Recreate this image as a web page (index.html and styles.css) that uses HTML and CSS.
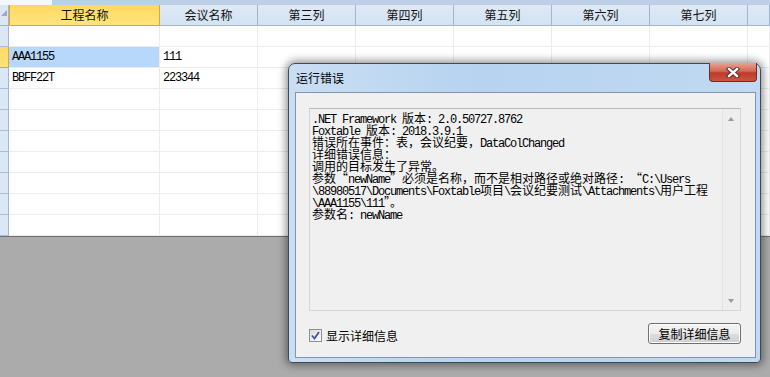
FILE: index.html
```html
<!DOCTYPE html>
<html lang="zh-CN">
<head>
    <meta charset="UTF-8">
    <title>运行错误</title>
    <link rel="stylesheet" href="styles.css">
</head>
<body>
    <div class="app">
        <div class="tabstrip">
            <div class="tab"></div>
        </div>

        <div class="grid">
            <div class="row head">
                <div class="rowhdr corner"></div>
                <div class="cell c1 sel">工程名称</div>
                <div class="cell">会议名称</div>
                <div class="cell">第三列</div>
                <div class="cell">第四列</div>
                <div class="cell">第五列</div>
                <div class="cell">第六列</div>
                <div class="cell">第七列</div>
                <div class="cell last"></div>
            </div>
            <div class="row">
                <div class="rowhdr"></div>
                <div class="cell c1"></div>
                <div class="cell"></div><div class="cell"></div><div class="cell"></div>
                <div class="cell"></div><div class="cell"></div><div class="cell"></div>
                <div class="cell last"></div>
            </div>
            <div class="row">
                <div class="rowhdr sel"></div>
                <div class="cell c1 current">AAA1155</div>
                <div class="cell">111</div>
                <div class="cell"></div><div class="cell"></div><div class="cell"></div>
                <div class="cell"></div><div class="cell"></div>
                <div class="cell last"></div>
            </div>
            <div class="row">
                <div class="rowhdr"></div>
                <div class="cell c1">BBFF22T</div>
                <div class="cell">223344</div>
                <div class="cell"></div><div class="cell"></div><div class="cell"></div>
                <div class="cell"></div><div class="cell"></div>
                <div class="cell last"></div>
            </div>
            <!-- empty rows -->
            <div class="row"><div class="rowhdr"></div><div class="cell c1"></div><div class="cell"></div><div class="cell"></div><div class="cell"></div><div class="cell"></div><div class="cell"></div><div class="cell"></div><div class="cell last"></div></div>
            <div class="row"><div class="rowhdr"></div><div class="cell c1"></div><div class="cell"></div><div class="cell"></div><div class="cell"></div><div class="cell"></div><div class="cell"></div><div class="cell"></div><div class="cell last"></div></div>
            <div class="row"><div class="rowhdr"></div><div class="cell c1"></div><div class="cell"></div><div class="cell"></div><div class="cell"></div><div class="cell"></div><div class="cell"></div><div class="cell"></div><div class="cell last"></div></div>
            <div class="row"><div class="rowhdr"></div><div class="cell c1"></div><div class="cell"></div><div class="cell"></div><div class="cell"></div><div class="cell"></div><div class="cell"></div><div class="cell"></div><div class="cell last"></div></div>
            <div class="row"><div class="rowhdr"></div><div class="cell c1"></div><div class="cell"></div><div class="cell"></div><div class="cell"></div><div class="cell"></div><div class="cell"></div><div class="cell"></div><div class="cell last"></div></div>
            <div class="row"><div class="rowhdr"></div><div class="cell c1"></div><div class="cell"></div><div class="cell"></div><div class="cell"></div><div class="cell"></div><div class="cell"></div><div class="cell"></div><div class="cell last"></div></div>
            <div class="row"><div class="rowhdr"></div><div class="cell c1"></div><div class="cell"></div><div class="cell"></div><div class="cell"></div><div class="cell"></div><div class="cell"></div><div class="cell"></div><div class="cell last"></div></div>
        </div>

        <div class="dialog">
            <div class="dlg-title">运行错误</div>
            <div class="dlg-close">
                <svg width="14" height="11" viewBox="0 0 14 11">
                    <path d="M3 2 L11 9 M11 2 L3 9" stroke="#3a2a28" stroke-width="4.2" stroke-linecap="square"/>
                    <path d="M3 2 L11 9 M11 2 L3 9" stroke="#fff" stroke-width="2.4" stroke-linecap="square"/>
                </svg>
            </div>
            <div class="dlg-body">
                <div class="detail-box">
                    <div class="detail">
                        <div class="ln"><span class="en">.NET Framework </span>版本<span class="en">: 2.0.50727.8762</span></div>
                        <div class="ln"><span class="en">Foxtable </span>版本<span class="en">: 2018.3.9.1</span></div>
                        <div class="ln">错误所在事件：表，会议纪要，<span class="en">DataColChanged</span></div>
                        <div class="ln">详细错误信息：</div>
                        <div class="ln">调用的目标发生了异常。</div>
                        <div class="ln">参数“<span class="en">newName</span>”必须是名称，而不是相对路径或绝对路径<span class="en">: </span>“<span class="en">C:\Users</span></div>
                        <div class="ln"><span class="en">\88980517\Documents\Foxtable</span>项目<span class="en">\</span>会议纪要测试<span class="en">\Attachments\</span>用户工程</div>
                        <div class="ln"><span class="en">\AAA1155\111</span>”。</div>
                        <div class="ln">参数名<span class="en">: newName</span></div>
                    </div>
                    <div class="vscroll">
                        <span class="arrow up"></span>
                        <span class="arrow down"></span>
                    </div>
                </div>
                <div class="dlg-foot">
                    <label class="check">
                        <span class="box">
                            <svg width="9" height="9" viewBox="0 0 9 9">
                                <path d="M1 4.5 L3.5 7.5 L8 1" fill="none" stroke="#3d56a0" stroke-width="1.8"/>
                            </svg>
                        </span>
                        显示详细信息
                    </label>
                    <button class="btn">复制详细信息</button>
                </div>
            </div>
        </div>
    </div>
</body>
</html>
```

FILE: styles.css
```css
body {
    margin: 0;
    font-family: "Noto Sans CJK SC", sans-serif;
    font-size: 12px;
    color: #000;
}

.app {
    position: relative;
    width: 770px;
    height: 377px;
    background-color: #ababab;
    overflow: hidden;
}

.tabstrip {
    height: 5px;
    background-color: #bccfe6;
}

.tab {
    width: 52px;
    height: 5px;
    background-color: #f4f7fc;
}

.grid {
    background-color: #fff;
    border-bottom: 1px solid #6f6f6f;
}

.row {
    display: flex;
    height: 21px;
}

.rowhdr {
    flex: 0 0 9px;
    box-sizing: border-box;
    background-color: #dce7f5;
    border-right: 1px solid #9eb6ce;
    border-bottom: 1px solid #a9bdd6;
}

.rowhdr.sel {
    background: linear-gradient(#ffd965, #ffe27c);
    border-color: #e0a43c;
}

.rowhdr.corner {
    position: relative;
    border-bottom-color: #9eb6ce;
}

.rowhdr.corner::after {
    content: "";
    position: absolute;
    right: 1px;
    top: 5px;
    border-style: solid;
    border-width: 0 0 6px 6px;
    border-color: transparent transparent #9aa9bb transparent;
}

.cell {
    flex: 0 0 98px;
    box-sizing: border-box;
    border-right: 1px solid #ececec;
    border-bottom: 1px solid #ececec;
    padding-left: 3px;
    line-height: 20px;
    font-family: "Liberation Mono", monospace;
    font-size: 12px;
    letter-spacing: -1.2px;
    white-space: nowrap;
}

.cell.c1 {
    flex-basis: 151px;
}

.cell.last {
    flex: 1 0 22px;
}

.cell.current {
    background-color: #b7d8fb;
}

.head .cell {
    font-family: "Noto Sans CJK SC", sans-serif;
    letter-spacing: 0;
    text-align: center;
    padding-left: 0;
    background: linear-gradient(#dfe9f6, #d4e2f2);
    border-right-color: #9eb6ce;
    border-bottom-color: #9eb6ce;
    color: #111;
}

.head .cell.sel {
    background: linear-gradient(#ffd862, #ffe57c);
    border: 1px solid #e0a43c;
    border-top: none;
}

/* error dialog */
.dialog {
    position: absolute;
    left: 288px;
    top: 63px;
    width: 473px;
    height: 300px;
    box-sizing: border-box;
    border: 1px solid #3f4a58;
    border-radius: 7px 7px 4px 4px;
    background: linear-gradient(90deg, #c9def4, #b7d3f0 40%, #c1d9f2 100%);
    box-shadow: 0 0 9px 2px rgba(0, 0, 0, 0.45);
    display: flex;
    flex-direction: column;
}

.dlg-title {
    height: 28px;
    line-height: 27px;
    padding-left: 7px;
    font-size: 12px;
    color: #000;
}

.dlg-close {
    position: absolute;
    right: 3px;
    top: -1px;
    width: 48px;
    height: 19px;
    box-sizing: border-box;
    border: 1px solid #6d2b22;
    border-top: none;
    border-radius: 0 0 4px 4px;
    background: linear-gradient(#e6a294, #d26a55 45%, #c0392a 55%, #c9563f);
    display: flex;
    align-items: center;
    justify-content: center;
}

.dlg-body {
    flex: 1;
    margin: 0 4px 4px 6px;
    border: 1px solid #8394ab;
    background-color: #f0f0f0;
    padding: 15px 14px 0 13px;
}

.detail-box {
    position: relative;
    height: 203px;
    box-sizing: border-box;
    border: 1px solid #d5d5d5;
    border-top-color: #b8b8b8;
    background-color: #f0f0f0;
    padding: 3px 0 0 2px;
}

.detail {
    font-size: 12px;
    color: #000;
}

.ln {
    height: 12px;
    line-height: 12px;
    white-space: pre;
}

.detail .en {
    font-family: "Liberation Mono", monospace;
    letter-spacing: -1.2px;
}

.vscroll {
    position: absolute;
    right: 0;
    top: 0;
    bottom: 0;
    width: 17px;
    background-color: #eeeeee;
    border-left: 1px solid #e3e3e3;
}

.arrow {
    position: absolute;
    left: 5px;
    border-style: solid;
    border-color: transparent;
}

.arrow.up {
    top: 8px;
    border-width: 0 3.5px 4px 3.5px;
    border-bottom-color: #9a9a9a;
}

.arrow.down {
    bottom: 7px;
    border-width: 4px 3.5px 0 3.5px;
    border-top-color: #9a9a9a;
}

.dlg-foot {
    display: flex;
    justify-content: space-between;
    align-items: center;
    margin-top: 12px;
}

.check {
    display: flex;
    align-items: center;
    gap: 4px;
    font-size: 12px;
    padding-top: 3px;
}

.box {
    width: 11px;
    height: 11px;
    border: 1px solid #8f8f8f;
    background: linear-gradient(135deg, #dcdcdc, #fbfbfb);
    display: flex;
    align-items: center;
    justify-content: center;
}

.btn {
    width: 93px;
    height: 21px;
    padding: 0;
    font-family: "Noto Sans CJK SC", sans-serif;
    font-size: 12px;
    color: #000;
    border: 1px solid #707070;
    border-radius: 3px;
    background: linear-gradient(#f3f3f3, #ebebeb 50%, #dddddd 51%, #cfcfcf);
    box-shadow: inset 0 0 0 1px #fcfcfc;
}
```
